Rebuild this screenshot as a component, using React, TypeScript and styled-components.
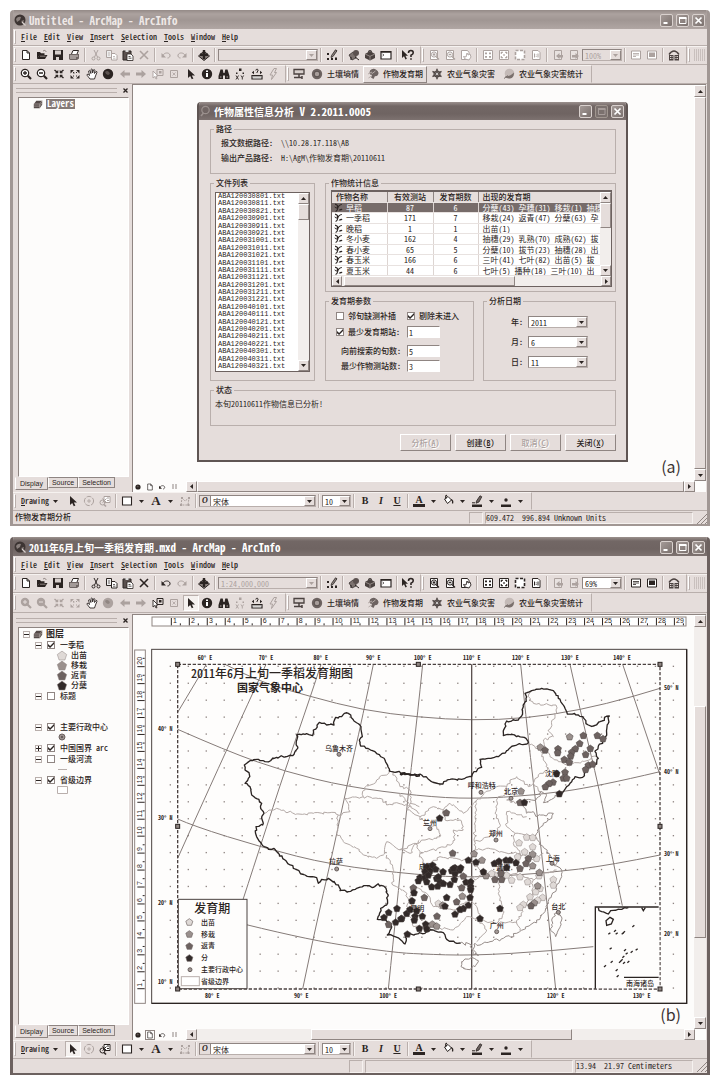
import React from 'react';
import styled, { createGlobalStyle, css } from 'styled-components';

const ink = '#2b2422';
const face = '#e5dddb';
const shade = '#8f8582';
const soft = '#b9afac';
const paper = '#fdfcfb';
const faded = '#aca29f';

const GlobalStyle = createGlobalStyle`
  *, *::before, *::after { box-sizing: border-box; }
  body {
    margin: 0;
    background: #fff;
    color: ${ink};
    font-family: 'Noto Sans CJK SC', 'Liberation Sans', sans-serif;
    font-feature-settings: 'hwid';
    font-size: 8px;
    line-height: 10px;
  }
  button, input, select { font: inherit; font-feature-settings: inherit; color: inherit; margin: 0; padding: 0; border: 0; background: none; border-radius: 0; }
  ul { margin: 0; padding: 0; list-style: none; }
`;

const raised = css`
  border: 1px solid;
  border-color: #fff ${shade} ${shade} #fff;
`;
const sunken = css`
  border: 1px solid;
  border-color: ${shade} #fff #fff ${shade};
`;

/* ---------- icons ---------- */

const cursor = 'M3 1v9l2.2-2 1.6 3.2 1.6-.8-1.6-3H10z';
const doc = 'M2.5 1.5h7v9h-7z';

const glyphs: Record<string, React.ReactNode> = {
  newDoc: <path d="M2.5 1.5h4.5l2.5 2.5v6.5h-7zM7 1.5v2.5h2.5" fill="#fff" stroke="currentColor" />,
  open: <><path d="M1 10V3h3l1 1.2h3.5V6H3.5z" fill="currentColor" /><path d="M3.3 6h8.2L9 10H1z" fill="currentColor" /><path d="M4 7.2h5.5M7 2.2c1-1.2 2.5-1 3.2.6" fill="none" stroke="#8b817e" /></>,
  save: <><path d="M1 1h10v10H1z" fill="currentColor" /><path d="M3 1.5h6v4H3zM4 8h3v3H4z" fill="#d8d0cd" /></>,
  print: <><path d="M3.5 5L5 1.5h5.5L9 5" fill="#fff" stroke="currentColor" /><path d="M1 5h10v4.5L9 11H2L1 10z" fill="#6e6462" /><path d="M2 7h8M2 9h6" stroke="#d8d0cd" /></>,
  cut: <><path d="M4 1l3.5 7M8 1L4.5 8" stroke="currentColor" fill="none" /><circle cx="3.5" cy="9.5" r="1.5" fill="none" stroke="currentColor" /><circle cx="8.5" cy="9.5" r="1.5" fill="none" stroke="currentColor" /></>,
  copy: <><path d="M.5 1.5h5v7h-5z" fill="#eee" stroke="currentColor" /><path d="M5.5 4.5H9l2 2v4.5H5.5z" fill="#fff" stroke="currentColor" /><path d="M7 7.5h2M7 9.2h2.5M2 4h2M2 6h2" stroke="currentColor" strokeWidth=".7" /></>,
  paste: <><path d="M1 2h8v9H1z" fill="#5a504e" stroke="currentColor" /><path d="M3.5 1h3v2h-3z" fill="#ddd" /><path d="M5 5h4l2 2v4.5H5z" fill="#fff" stroke="currentColor" strokeWidth=".8" /><path d="M6.5 7.5h2M6.5 9.2h3" stroke="currentColor" strokeWidth=".8" /></>,
  del: <path d="M2 2l8 8M10 2L2 10" stroke="currentColor" strokeWidth="1.6" fill="none" />,
  undo: <><path d="M3 6.5C4 3.5 9 3 10 6c.4 1.5-.8 3-2.5 3" fill="none" stroke="currentColor" /><path d="M1.5 4v4.5H6z" fill="currentColor" /></>,
  redo: <><path d="M9 6.5C8 3.5 3 3 2 6c-.4 1.5.8 3 2.5 3" fill="none" stroke="currentColor" /><path d="M10.5 4v4.5H6z" fill="currentColor" /></>,
  add: <><path d="M6 2l5.5 5L6 11.5.5 7z" fill="#8a807d" stroke="currentColor" /><path d="M4.8 1h2.4v3.5H10v2.4H7.2V10H4.8V6.9H2V4.5h2.8z" fill="currentColor" /></>,
  editor: <><path d="M5.5 6.5L9.5.8l1.5 1-4 5.7-2 1z" fill="#8a807d" stroke="currentColor" strokeWidth=".8" /><path d="M1 4h2v2H1zM1 9h2v2H1zM5 9h2v2H5zM9 8.5h2v2.5H9z" fill="currentColor" /></>,
  catalog: <><path d="M1 6l4-3 3 2v4l-4 2z" fill="#7d7370" stroke="currentColor" strokeWidth=".7" /><circle cx="8" cy="4" r="3" fill="#5b514f" /><path d="M7 8l4 3M3 8v3" stroke="currentColor" /></>,
  toolbox: <><path d="M1 5l5-3 5 3v4l-5 2.5L1 9z" fill="#4a413f" /><path d="M1 5l5 2.3L11 5M6 7.3v4" stroke="#a49a97" fill="none" strokeWidth=".8" /><path d="M4 2.5q2-2 4 0" stroke={ink} fill="none" /></>,
  command: <><path d="M1 2.5h10v7.5H1z" fill="#fff" stroke="currentColor" strokeWidth="1.2" /><path d="M1 3h10" stroke="currentColor" strokeWidth="1.6" /><path d="M2.5 5l1.5 1-1.5 1" stroke="currentColor" fill="none" strokeWidth=".7" /></>,
  help: <><path d="M0 1v8l2-1.8L3.5 10.5l1.4-.7-1.5-3H6z" fill="currentColor" /><path d="M6.500 4q0-2.500 2.400-2.500T11.200 4Q11.200 5.200 9 6.200V8" fill="none" stroke="currentColor" strokeWidth="1.6" /><path d="M8.200 9.200h1.6v1.6H8.200z" fill="currentColor" /></>,
  zoomIn: <><circle cx="5" cy="5" r="3.7" fill="#fff" stroke="currentColor" strokeWidth="1.2" /><path d="M5 3v4M3 5h4" stroke="currentColor" strokeWidth="1.3" /><path d="M7.8 7.8L11 11" stroke="currentColor" strokeWidth="2.2" /></>,
  zoomOut: <><circle cx="5" cy="5" r="3.7" fill="#fff" stroke="currentColor" strokeWidth="1.2" /><path d="M3 5h4" stroke="currentColor" strokeWidth="1.3" /><path d="M7.8 7.8L11 11" stroke="currentColor" strokeWidth="2.2" /></>,
  zoomInOff: <><circle cx="5" cy="5" r="4.2" fill="currentColor" /><path d="M5 3v4M3 5h4" stroke={face} /><path d="M7.5 7.5L11 11" stroke="currentColor" strokeWidth="2.2" /></>,
  zoomOutOff: <><circle cx="5" cy="5" r="4.2" fill="currentColor" /><path d="M3 5h4" stroke={face} /><path d="M7.5 7.5L11 11" stroke="currentColor" strokeWidth="2.2" /></>,
  fixedIn: <><path d="M2.5 5H5V2.500zM9.500 5H7V2.500zM2.500 7H5v2.500zM9.500 7H7v2.500z" fill="currentColor" stroke="currentColor" strokeWidth=".5" /><path d="M1.5 2L4 4M10.500 2L8 4M1.500 10L4 8M10.500 10L8 8" stroke="currentColor" strokeWidth="1.5" /></>,
  fixedOut: <><path d="M1.500 2h3.500l-3.500 3.500zM10.500 2H7l3.500 3.500zM1.500 10.500H5L1.500 7zM10.500 10.500H7L10.500 7z" fill="currentColor" /><path d="M4 4.500h1v1M8 4.500H7M4 8h1M8 8H7" stroke="currentColor" /></>,
  pan: <path d="M4 11L1 7.200q-.3-1.300 1.200-.8L3.500 7.500 2.600 3q.7-1.200 1.400 0l.9 2.500L5 1.500q.8-1 1.400 0L6.600 5l1-3.200q.9-.6 1.300.3L8.500 5.500 10 3.500q1-.3 1 .7L9.500 8 8.500 11z" fill="#fff" stroke="currentColor" strokeWidth=".9" />,
  globe: <><circle cx="6" cy="6" r="5.2" fill="currentColor" /><path d="M3 4q2-2 4 0t-1 3q-2 0-3-3zM8 8l1.500-1" fill="#7d7370" opacity=".6" /></>,
  back: <path d="M1 6l4.500-4v2.500H11v3H5.500V10z" fill="currentColor" />,
  forward: <path d="M11 6L6.500 2v2.500H1v3h5.500V10z" fill="currentColor" />,
  selFeature: <><path d="M5 1.500h6v6H5z" fill="none" stroke="currentColor" /><path d="M7 3h2.500v2.500H7z" fill="currentColor" /><path d="M1 3v7l1.800-1.500L4 11l1-.5-1.100-2.500H6z" fill="#fff" stroke="currentColor" strokeWidth=".9" /></>,
  clearSel: <><path d="M2.500 2.500h7v7h-7z" fill="none" stroke="currentColor" /><path d="M4.500 4.500l3 3M7.500 4.500l-3 3" stroke="currentColor" strokeWidth=".8" /></>,
  arrow: <path d={cursor} fill="currentColor" />,
  info: <><circle cx="6" cy="6" r="5.2" fill="currentColor" /><path d="M5 5h2v4H5zM5 2.500h2V4H5z" fill="#fff" /></>,
  find: <><path d="M2.500 1.500h2.200L5.500 5h1l.8-3.500h2.200L11.500 8v3H7V7.500H5V11H.5V8z" fill="currentColor" /><path d="M2 9h1.500M8.500 9H10" stroke="#b5aba8" /></>,
  goXY: <><path d="M5 .5h2.500V3H5zM2 4.500h1.500V6H2zM8.500 4.500H10V6H8.500z" fill="currentColor" /><path d="M2 7.500l2.500 4M4.500 7.500l-2.500 4M7 7.500l1.300 2v2M9.600 7.500l-1.300 2" stroke="currentColor" strokeWidth=".9" fill="none" /></>,
  measure: <><path d="M1 7.500h10v3.500H1z" fill="#fff" stroke="currentColor" strokeWidth="1.2" /><path d="M3 7.500v2M5 7.500v2M7 7.500v2M9 7.500v2" stroke="currentColor" strokeWidth=".8" /><path d="M.8 4.500L3 2.800v3.400zM11.200 4.500L9 2.800v3.400z" fill="currentColor" /><path d="M4.800 2.500Q5 1 6.200 1.200T7 3L6 4v1" fill="none" stroke="currentColor" /></>,
  lightning: <path d="M7 .5H9.500L7.500 4.500h2L4.500 11.500 5.500 7H3z" fill="none" stroke="currentColor" />,
  station: <><path d="M1 1.500h10v4.500H1z" fill="#d8d0cd" stroke="#4b4240" strokeWidth="1.3" /><path d="M6 6v3M1 9.500h8M9 8v3" stroke="#4b4240" strokeWidth="1.5" /></>,
  ring: <><circle cx="6" cy="6" r="5.2" fill="#6d6361" /><circle cx="6" cy="6" r="2.8" fill="#a79d9a" stroke="#4b4240" strokeWidth=".8" /></>,
  crop: <><path d="M3 2.500Q6-.5 9.500 2t1 5.500Q9 8.500 8 8L6.500 11 4 9.500 5 7Q1.500 7 3 2.500z" fill="#6d6361" /><path d="M1 6l4-2M4.500 6l4-3M1.500 10l3-2" stroke="#b5aba8" /></>,
  flower: <><path d="M6 .8v10.400M1.500 3.400l9 5.200M10.500 3.400l-9 5.200" stroke="#4b4240" strokeWidth="1.5" /><circle cx="6" cy="6" r="3" fill="none" stroke="#4b4240" strokeWidth="1.2" /><circle cx="6" cy="6" r="1" fill="#eee" /></>,
  ball: <><circle cx="6.5" cy="5.5" r="4.8" fill="#c4bab7" /><path d="M2 8q4 1.500 9-3.500Q11 10 7 10.500T2 8z" fill="#7a706d" /><path d="M1 10.500l4-3" stroke="#7a706d" /></>,
  pageZoomIn: <><path d={doc} fill="#fff" stroke="currentColor" /><circle cx="6" cy="5.5" r="2.6" fill="#fff" stroke="currentColor" /><path d="M6 4.200v2.600M4.700 5.500h2.600M8 7.500l3 3" stroke="currentColor" strokeWidth="1.3" /></>,
  pageZoomOut: <><path d={doc} fill="#fff" stroke="currentColor" /><circle cx="6" cy="5.5" r="2.6" fill="#fff" stroke="currentColor" /><path d="M4.700 5.500h2.600M8 7.500l3 3" stroke="currentColor" strokeWidth="1.3" /></>,
  pagePan: <><path d="M1.500 1.500h6l1.500 2v7H1.500z" fill="#fff" stroke="currentColor" /><path d="M5 10L3.500 7.500 6 8l1-4 1.200 2L10 5l1 3-2 3z" fill="#fff" stroke="currentColor" strokeWidth=".9" /></>,
  pageIn: <><path d="M1.500 1.500h9v9h-9z" fill="#fff" stroke="currentColor" /><path d="M3 3.500h2v1.700H3zM7 3.500h2v1.700H7zM3 7h2v1.700H3zM7 7h2v1.700H7z" fill="currentColor" /></>,
  pageOut: <><path d="M1.500 1.500h9v9h-9z" fill="#fff" stroke="currentColor" /><path d="M3 3h2L3 5zM9 3H7l2 2zM3 9h2L3 7zM9 9H7l2-2zM5.500 5.500h1v1h-1z" fill="currentColor" stroke="currentColor" strokeWidth=".5" /></>,
  pageWhole: <path d="M1.500 1.500h9v9h-9z" fill="#fff" stroke="currentColor" strokeWidth="1.6" strokeDasharray="3 1.5" />,
  page11: <><path d="M2.500 1.500h5.500l2 2v7H2.500z" fill="#fff" stroke="currentColor" /><path d="M4.500 4.500v4M8 4.500v4M6.200 5.500v.8M6.200 7.200V8" stroke="currentColor" /></>,
  pageBack: <><path d={doc} fill="#e8e2e0" stroke="currentColor" /><path d="M4 7l3.500-3v2H11v2.500H7.500V10z" fill="currentColor" /></>,
  pageFwd: <><path d={doc} fill="#e8e2e0" stroke="currentColor" /><path d="M11 7L7.500 4v2H4v2.500h3.500V10z" fill="currentColor" /></>,
  draft: <><path d="M1.500 2h9v8h-9z" fill="#fff" stroke="currentColor" /><path d="M3 4.500h6M3 6h6M3 7.500h3" stroke="currentColor" strokeWidth=".8" /></>,
  focus: <><path d="M1.500 2h9v8h-9z" fill="#fff" stroke="currentColor" /><path d="M3 3.500h6v4.500H3z" fill="currentColor" /></>,
  layout: <><path d="M1 5.500Q6-1.500 11 5.500" fill="none" stroke="#4b4240" strokeWidth="1.3" /><path d="M1 6h4.500v5.500H1zM6.500 6H11v5.500H6.500z" fill="#4b4240" /><path d="M2 7.500h2.500M2 9.500h2.500M7.500 7.500H10M7.500 9.500H10" stroke="#e5dddb" strokeDasharray="1 .6" /></>,
  haze: <path d="M0 1h12M0 3h12M0 5h12M0 7h12M0 9h12M0 11h12" stroke="currentColor" strokeDasharray="1 1" />,
  rotate: <><circle cx="6" cy="6" r="4.6" fill="none" stroke="currentColor" strokeDasharray="5 1.2" /><path d="M4 6h4M6 4v4" stroke="currentColor" strokeWidth=".8" /></>,
  zoomSel: <><path d="M5 1.500h6v6H5z" fill="#fff" stroke="currentColor" /><path d="M3.500 3.500l4 4M7.500 3.500l-4 4M8 3h2M8 5.500h2" stroke="currentColor" /><circle cx="3.5" cy="7.5" r="2.5" fill="none" stroke="currentColor" /><path d="M5 9.500l2 2" stroke="currentColor" strokeWidth="1.6" /></>,
  box: <path d="M1.500 2h9v8h-9z" fill="#fff" stroke="currentColor" strokeWidth="1.1" />,
  vertices: <><path d="M2 10L3 3l3 3 4-3-1 7z" fill="none" stroke="currentColor" strokeDasharray="2 1" /><path d="M1 9h2v2H1zM2 2h2v2H2zM9 2h2v2H9zM8.500 9h2v2h-2z" fill="currentColor" /></>,
  fill: <><path d="M2.500 4L6 1.500 9.500 5 5.500 8.500z" fill="#fff" stroke="currentColor" /><path d="M4 4q-1-4 1-3.500M9 4.500q2.500 1 1.500 4" fill="none" stroke="currentColor" strokeWidth="1.2" /></>,
  pen: <><path d="M5.500 6L9 .8l1.800 1L8 7 5 8.200z" fill="#6d6361" stroke="currentColor" strokeWidth=".8" /><path d="M1 7.800h3" stroke="currentColor" /><path d="M1 9.500h10V12H1z" fill="currentColor" /></>,
  marker: <><circle cx="6" cy="5" r="1.7" fill="currentColor" /><path d="M1 9.500h10V12H1z" fill="currentColor" /></>,
  layers: <><path d="M1 6l3-4h7v5l-3 4H1z" fill="#544a48" /><path d="M1 6h7v5M8 6l3-4M1 8.500h7l3-4" stroke="#b5aba8" fill="none" strokeWidth=".8" /></>,
  sprout: <><path d="M1.500 1.500L4.500 3v4M10.500 2Q6 2.500 5 7T2 11" fill="none" stroke="currentColor" strokeWidth="1.5" /><path d="M6 9.500q3.500 1.500 5.500-1.500-3-1.500-5.500 1.500zM0 4.500l3.500 1v2.500z" fill="currentColor" /></>,
  app: <><circle cx="6" cy="6" r="5.5" fill="#3d3533" /><path d="M2 5q2-3 5-2l-1 3-3 2zM7 7l3-1-1 3z" fill="#8a807d" /><path d="M8 8l3.500 3.500" stroke="#d8d0cd" strokeWidth="1.2" /></>,
  lens: <><circle cx="6.5" cy="5" r="3.7" fill="none" stroke="#9b918e" strokeWidth="1.2" /><path d="M4.500 8L2 11" stroke="#9b918e" strokeWidth="1.6" /></>,
};

const Svg = styled.svg`
  display: block;
  flex: none;
  overflow: visible;
`;
const Icon = ({ name, size = 12 }: { name: string; size?: number }) => (
  <Svg width={size} height={size} viewBox="0 0 12 12" aria-hidden="true">{glyphs[name]}</Svg>
);

/* ---------- window frame ---------- */

const Page = styled.main`
  display: flex;
  flex-direction: column;
  gap: 11px;
  padding: 10px;
`;

const Frame = styled.section<{ $active?: boolean }>`
  display: flex;
  flex-direction: column;
  border: 3px solid ${(p) => (p.$active ? '#6c615f' : '#a19794')};
  border-top: 0;
  border-bottom-width: 2px;
  border-radius: 4px 4px 0 0;
  background: ${face};
  overflow: hidden;
`;

const TitleBar = styled.header<{ $active?: boolean }>`
  display: flex;
  align-items: center;
  gap: 3px;
  height: 19px;
  padding: 1px 2px 0 1px;
  background: ${(p) => (p.$active
    ? 'linear-gradient(#9b918e 0, #726765 4px, #6f6462 12px, #7d7270 100%)'
    : 'linear-gradient(#948a87 0, #aca29f 4px, #a09693 10px, #b0a6a3 100%)')};
  color: ${(p) => (p.$active ? '#fff' : '#eee8e6')};
`;
const Title = styled.h1`
  flex: 1;
  margin: 0;
  font-size: 11px;
  line-height: 16px;
  font-weight: 700;
  white-space: pre;
`;
const TitleZh = styled.span`font-size: 10px;`;

const CaptionButtons = styled.div`
  display: flex;
  gap: 3px;
`;
const CaptionButton = styled.button`
  display: grid;
  place-items: center;
  width: 13px;
  height: 13px;
  border: 1px solid #d9d1ce;
  border-radius: 2px;
  background: linear-gradient(135deg, #a49a97, #7b716e);
  color: #fff;
  &:disabled { border-color: #a0968f; color: #a79d9a; background: #7b716e; }
`;
const Captions = ({ fixed }: { fixed?: boolean }) => (
  <CaptionButtons>
    <CaptionButton aria-label="Minimize"><Svg width="9" height="9" viewBox="0 0 9 9"><path d="M1.5 7h4" stroke="currentColor" strokeWidth="2" /></Svg></CaptionButton>
    <CaptionButton aria-label="Maximize" disabled={fixed}><Svg width="9" height="9" viewBox="0 0 9 9"><path d="M1.5 2h6.5v5.500H1.500z" fill="none" stroke="currentColor" /><path d="M1 2h7.500" stroke="currentColor" strokeWidth="2" /></Svg></CaptionButton>
    <CaptionButton aria-label="Close"><Svg width="9" height="9" viewBox="0 0 9 9"><path d="M1.500 1.500l6 6M7.500 1.500l-6 6" stroke="currentColor" strokeWidth="1.7" /></Svg></CaptionButton>
  </CaptionButtons>
);

const Bar = styled.div<{ $h: number }>`
  display: flex;
  height: ${(p) => p.$h}px;
  border-bottom: 1px solid ${soft};
  overflow: hidden;
`;
const MenuList = styled.div`
  display: flex;
  align-items: center;
  gap: 7px;
  padding-left: 3px;
`;
const MenuItem = styled.button`
  font-weight: 500;
`;
const Section = styled.div`
  display: flex;
  align-items: center;
  flex: none;
  padding-right: 4px;
  border: 1px solid;
  border-color: #f6f2f0 ${soft} transparent transparent;
  border-left: 0;
`;
const Grip = styled.span`
  align-self: stretch;
  width: 2px;
  margin: 1px 2px 1px 1px;
  border: 1px solid;
  border-color: #fff ${soft} ${soft} #fff;
`;
const Pairs = styled.div`
  display: flex;
  gap: 1px;
`;
const Pair = styled.div`display: flex;`;
const Divider = styled.span`
  width: 2px;
  height: 14px;
  margin: 0 2px;
  border-left: 1px solid ${soft};
  border-right: 1px solid #f6f2f0;
`;
const ToolButton = styled.button<{ $pressed?: boolean }>`
  display: grid;
  place-items: center;
  width: 16px;
  height: 16px;
  border: 1px solid transparent;
  ${(p) => p.$pressed && css`border-color: ${soft} #fff #fff ${soft}; background: #f5f1ef;`}
  &:disabled { color: ${faded}; }
`;
const Tool = ({ name, off, pressed }: { name: string; off?: boolean; pressed?: boolean }) => (
  <ToolButton aria-label={name} disabled={off} $pressed={pressed}><Icon name={name} /></ToolButton>
);
const TextTool = styled.button<{ $raised?: boolean }>`
  display: flex;
  align-items: center;
  gap: 4px;
  height: 17px;
  padding: 0 3px;
  border: 1px solid transparent;
  font-weight: 500;
  white-space: nowrap;
  ${(p) => p.$raised && css`border-color: #fff ${shade} ${shade} #fff;`}
`;

/* ---------- drop-down ---------- */

const ComboBox = styled.span<{ $w: number; $h: number; $off?: boolean }>`
  display: flex;
  flex: none;
  width: ${(p) => p.$w}px;
  height: ${(p) => p.$h}px;
  ${sunken}
  border-right-color: ${soft};
  border-bottom-color: ${soft};
  background: ${(p) => (p.$off ? face : '#fff')};
  color: ${(p) => (p.$off ? faded : ink)};
`;
const ComboSelect = styled.select`
  flex: 1;
  min-width: 0;
  padding-left: 2px;
  appearance: none;
  line-height: 9px;
  opacity: 1;
`;
const ComboArrow = styled.span`
  display: grid;
  place-items: center;
  width: 11px;
  background: ${face};
  ${raised}
`;
const Caret = ({ flip }: { flip?: 'up' | 'left' | 'right' }) => (
  <Svg width="5" height="5" viewBox="0 0 5 5" aria-hidden="true">
    <path fill="currentColor" d={flip === 'up' ? 'M0 4L2.5 1 5 4z' : flip === 'left' ? 'M4 0L1 2.5 4 5z' : flip === 'right' ? 'M1 0l3 2.5L1 5z' : 'M0 1h5L2.5 4z'} />
  </Svg>
);
const Combo = ({ label, value, w, h = 12, off, icon, id }: { label?: string; value: string; w: number; h?: number; off?: boolean; icon?: React.ReactNode; id?: string }) => (
  <ComboBox $w={w} $h={h} $off={off}>
    {icon}
    <ComboSelect id={id} aria-label={label} disabled={off} defaultValue={value}><option>{value}</option></ComboSelect>
    <ComboArrow><Caret /></ComboArrow>
  </ComboBox>
);

/* ---------- scroll bars ---------- */

const ScrollTrack = styled.div<{ $across?: boolean; $size: number }>`
  display: flex;
  flex-direction: ${(p) => (p.$across ? 'row' : 'column')};
  ${(p) => (p.$across ? `height: ${p.$size}px;` : `width: ${p.$size}px;`)}
  background: #f2eeec;
  min-width: 0;
`;
const ScrollButton = styled.button<{ $size: number }>`
  display: grid;
  place-items: center;
  flex: none;
  width: ${(p) => p.$size}px;
  height: ${(p) => p.$size}px;
  background: ${face};
  ${raised}
`;
const Rail = styled.div<{ $across?: boolean }>`
  display: flex;
  flex: 1;
  min-width: 0;
  min-height: 0;
  flex-direction: ${(p) => (p.$across ? 'row' : 'column')};
`;
const Thumb = styled.div<{ $span: number }>`
  flex: ${(p) => p.$span} 1 0;
  background: ${face};
  ${raised}
`;
const Space = styled.div<{ $n: number }>`flex: ${(p) => p.$n} 1 0;`;
const Scroll = ({ across, size, before, span, after }: { across?: boolean; size: number; before: number; span: number; after: number }) => (
  <ScrollTrack $across={across} $size={size}>
    <ScrollButton $size={size} aria-label={across ? 'Scroll left' : 'Scroll up'}><Caret flip={across ? 'left' : 'up'} /></ScrollButton>
    <Rail $across={across}>
      <Space $n={before} />
      <Thumb $span={span} />
      <Space $n={after} />
    </Rail>
    <ScrollButton $size={size} aria-label={across ? 'Scroll right' : 'Scroll down'}><Caret flip={across ? 'right' : undefined} /></ScrollButton>
  </ScrollTrack>
);

/* ---------- toolbars ---------- */

const menus = ['File', 'Edit', 'View', 'Insert', 'Selection', 'Tools', 'Window', 'Help'];

const StandardBar = ({ layout }: { layout?: boolean }) => (
  <Bar $h={19}>
    <Section>
      <Grip />
      <Tool name="newDoc" /><Tool name="open" /><Tool name="save" /><Tool name="print" />
      <Divider />
      <Tool name="cut" off={!layout} /><Tool name="copy" off={!layout} /><Tool name="paste" /><Tool name="del" off={!layout} />
      <Divider />
      <Tool name="undo" off={!layout} /><Tool name="redo" off />
      <Divider />
      <Tool name="add" />
      <Divider />
      <Combo label="Map scale" value={layout ? '1:24,000,000' : ''} w={100} off />
      <Divider />
      <Tool name="editor" />
      <Divider />
      <Tool name="catalog" /><Tool name="toolbox" /><Tool name="command" />
      <Divider />
      <Tool name="help" />
    </Section>
    <Section>
      <Grip />
      <Tool name="pageZoomIn" off={!layout} /><Tool name="pageZoomOut" off={!layout} /><Tool name="pagePan" off={!layout} />
      <Divider />
      <Tool name="pageIn" off={!layout} /><Tool name="pageOut" off={!layout} /><Tool name="pageWhole" off={!layout} /><Tool name="page11" off={!layout} />
      <Divider />
      <Tool name="pageBack" off /><Tool name="pageFwd" off />
      <Combo label="Page zoom" value={layout ? '69%' : '100%'} w={40} off={!layout} />
      <Divider />
      <Tool name="draft" off={!layout} /><Tool name="focus" off={!layout} />
      <Divider />
      <Tool name="layout" />
    </Section>
    <Section>
      <Grip />
      <Tool name="haze" off />
    </Section>
  </Bar>
);

const ToolsBar = ({ layout }: { layout?: boolean }) => (
  <Bar $h={layout ? 20 : 19}>
    <Section>
      <Grip />
      <Pairs>
        <Pair><Tool name={layout ? 'zoomInOff' : 'zoomIn'} off={layout} /><Tool name={layout ? 'zoomOutOff' : 'zoomOut'} off={layout} /></Pair>
        <Pair><Tool name="fixedIn" off={layout} /><Tool name="fixedOut" off={layout} /></Pair>
        <Pair><Tool name="pan" /><Tool name="globe" off={layout} /></Pair>
        <Pair><Tool name="back" off /><Tool name="forward" off /></Pair>
        <Pair><Tool name="selFeature" off={!layout} /><Tool name="clearSel" off /></Pair>
        <Pair><Tool name="arrow" pressed={layout} /><Tool name="info" /></Pair>
        <Pair><Tool name="find" /><Tool name="goXY" off={layout} /></Pair>
        <Pair><Tool name="measure" /><Tool name="lightning" off /></Pair>
      </Pairs>
    </Section>
    <Section>
      <Grip />
      <Tool name="station" />
      <TextTool><Icon name="ring" />土壤墒情</TextTool>
      <TextTool $raised={!layout}><Icon name="crop" />作物发育期</TextTool>
      <TextTool><Icon name="flower" />农业气象灾害</TextTool>
      <TextTool><Icon name="ball" />农业气象灾害统计</TextTool>
    </Section>
  </Bar>
);

const DrawLabel = styled.button`
  display: flex;
  align-items: center;
  gap: 4px;
  margin: 0 7px 0 3px;
  font-weight: 500;
`;
const FormatButton = styled.button<{ $kind?: 'b' | 'i' | 'u' | 'bar' }>`
  width: 16px;
  height: 14px;
  font-family: 'Liberation Serif', serif;
  font-size: ${(p) => (p.$kind ? 10 : 13)}px;
  line-height: 12px;
  font-weight: 700;
  font-style: ${(p) => (p.$kind === 'i' ? 'italic' : 'normal')};
  text-decoration: ${(p) => (p.$kind === 'u' ? 'underline' : 'none')};
`;
const Underbar = styled.span`
  display: block;
  width: 12px;
  margin: 0 auto;
  height: 12px;
  line-height: 9px;
  border-bottom: 3px solid ${ink};
`;
const DropButton = styled.button`
  display: grid;
  place-items: center;
  width: 13px;
  height: 14px;
`;
const Drop = () => <DropButton aria-label="More"><Caret /></DropButton>;
const TypeMark = styled.span`
  display: grid;
  place-items: center;
  width: 11px;
  background: ${face};
  border-right: 1px solid ${shade};
  font-family: 'Liberation Serif', serif;
  font-style: italic;
  font-weight: 700;
`;

const DrawingBar = ({ layout }: { layout?: boolean }) => (
  <Bar $h={19}>
    <Section>
      <Grip />
      <DrawLabel><span><u>D</u>rawing</span><Caret /></DrawLabel>
      <Tool name="arrow" pressed={layout} /><Tool name="rotate" off /><Tool name="zoomSel" off={!layout} />
      <Divider />
      <Tool name="box" /><Drop />
      <FormatButton aria-label="Text">A</FormatButton><Drop />
      <Tool name="vertices" off />
      <Divider />
      <Combo label="Font" value="宋体" w={117} icon={<TypeMark>O</TypeMark>} />
      <Divider />
      <Combo label="Font size" value="10" w={29} />
      <Divider />
      <FormatButton $kind="b">B</FormatButton>
      <FormatButton $kind="i">I</FormatButton>
      <FormatButton $kind="u">U</FormatButton>
      <Divider />
      <FormatButton $kind="bar" aria-label="Font colour"><Underbar>A</Underbar></FormatButton><Drop />
      <Tool name="fill" /><Drop />
      <Tool name="pen" /><Drop />
      <Tool name="marker" /><Drop />
    </Section>
  </Bar>
);

const StatusBar = styled.footer<{ $h: number }>`
  display: flex;
  gap: 2px;
  height: ${(p) => p.$h}px;
  padding: 1px 0 0 2px;
  font-weight: 500;
  white-space: pre;
`;
const Message = styled.span`flex: 1;`;
const Slot = styled.span<{ $w: number }>`
  width: ${(p) => p.$w}px;
  ${sunken}
  border-color: ${soft} #f6f2f0 #f6f2f0 ${soft};
  font-weight: 400;
  line-height: 9px;
`;
const SizeGrip = () => (
  <Svg width="12" height="12" viewBox="0 0 12 12" aria-hidden="true"><path d="M12 2L2 12M12 6l-6 6M12 10l-2 2" stroke={shade} /></Svg>
);

/* ---------- workspace ---------- */

const Workspace = styled.div<{ $h: number; $top: number }>`
  display: flex;
  min-height: ${(p) => p.$h}px;
  padding: ${(p) => p.$top}px 1px 0 0;
`;
const Contents = styled.aside`
  display: flex;
  flex-direction: column;
  width: 119px;
  flex: none;
  padding: 0 3px 2px 5px;
`;
const ContentsHead = styled.div`
  display: flex;
  align-items: center;
  gap: 4px;
  height: 13px;
  margin-left: -2px;
`;
const DragLines = styled.span`
  flex: 1;
  height: 5px;
  border-top: 1px solid ${soft};
  border-bottom: 1px solid ${soft};
`;
const CloseX = styled.button`
  display: grid;
  place-items: center;
  width: 8px;
  height: 10px;
`;
const TreeBox = styled.ul`
  display: flex;
  flex-direction: column;
  flex: 1;
  gap: 1px;
  padding-top: 1px;
  background: ${paper};
  ${sunken}
`;
const TreeRow = styled.div<{ $level: number }>`
  display: flex;
  align-items: center;
  gap: ${(p) => (p.$level === 2 ? 4 : p.$level ? 5 : 3)}px;
  height: 10px;
  padding-left: ${(p) => [4, 16, 38][p.$level]}px;
  font-weight: 500;
  white-space: nowrap;
`;
const RootName = styled.strong<{ $selected?: boolean }>`
  font-size: 9px;
  ${(p) => p.$selected && css`background: #857a77; color: #fff; padding: 0 1px;`}
`;
const Expander = styled.button<{ $hidden?: boolean }>`
  display: grid;
  place-items: center;
  width: 7px;
  height: 7px;
  border: 1px solid ${soft};
  visibility: ${(p) => (p.$hidden ? 'hidden' : 'visible')};
`;
const Check = styled.input`
  appearance: none;
  flex: none;
  width: 8px;
  height: 8px;
  border: 1px solid ${shade};
  background: #fff;
  &:checked::before {
    content: '';
    display: block;
    width: 6px;
    height: 6px;
    background: ${ink};
    clip-path: polygon(0 35%, 35% 65%, 100% 0, 100% 35%, 35% 100%, 0 70%);
  }
`;
const TreeLabel = styled.label`
  display: flex;
  align-items: center;
  gap: 5px;
`;
const ViewTabs = styled.div`
  display: flex;
  align-items: flex-start;
  height: 13px;
  margin-left: -3px;
`;
const ViewTab = styled.button<{ $on?: boolean }>`
  height: ${(p) => (p.$on ? 13 : 11)}px;
  padding: 0 ${(p) => (p.$on ? 4 : 3)}px;
  border: 1px solid;
  border-color: ${(p) => (p.$on ? face : shade)} ${shade} ${shade} #fff;
  font-family: 'Liberation Sans', sans-serif;
  font-size: 7px;
  line-height: ${(p) => (p.$on ? 11 : 9)}px;
`;

const Minus = ({ plus }: { plus?: boolean }) => (
  <Svg width="5" height="5" viewBox="0 0 5 5" aria-hidden="true"><path d={plus ? 'M0 2.5h5M2.5 0v5' : 'M0 2.5h5'} stroke={ink} /></Svg>
);
const pentagon = (x: number, y: number, r: number) =>
  [0, 1, 2, 3, 4].map((i) => {
    const a = -Math.PI / 2 + (i * 2 * Math.PI) / 5;
    return `${(x + r * Math.cos(a)).toFixed(1)},${(y + r * Math.sin(a)).toFixed(1)}`;
  }).join(' ');

const tone = { l: '#dfd9d6', g: '#9a908d', m: '#6d6260', d: '#322a29' };
type Tone = keyof typeof tone;

const Pent = ({ t }: { t: Tone }) => (
  <Svg width="10" height="9" viewBox="0 0 10 9" aria-hidden="true"><polygon points={pentagon(5, 5, 4.9)} fill={tone[t]} stroke="#8f8582" strokeWidth=".5" /></Svg>
);

const Layer = ({ name, checked, plus, children }: { name: string; checked?: boolean; plus?: boolean; children?: React.ReactNode }) => (
  <li>
    <TreeRow $level={1}>
      <Expander aria-label={name}><Minus plus={plus} /></Expander>
      <TreeLabel><Check type="checkbox" defaultChecked={checked} />{name}</TreeLabel>
    </TreeRow>
    {children}
  </li>
);

const Panel = ({ layout }: { layout?: boolean }) => (
  <Contents>
    <ContentsHead>
      <DragLines />
      <CloseX aria-label="Close"><Svg width="5" height="5" viewBox="0 0 5 5"><path d="M.5.5l4 4M4.5.5l-4 4" stroke={ink} strokeWidth="1.3" /></Svg></CloseX>
    </ContentsHead>
    <TreeBox>
      <li>
        <TreeRow $level={0}>
          <Expander $hidden={!layout} aria-label="Layers"><Minus /></Expander>
          <Icon name="layers" size={10} />
          <RootName $selected={!layout}>{layout ? '图层' : 'Layers'}</RootName>
        </TreeRow>
      </li>
      {layout && (
        <>
          <Layer name="一季稻" checked>
            <TreeRow $level={2}><Pent t="l" />出苗</TreeRow>
            <TreeRow $level={2}><Pent t="g" />移栽</TreeRow>
            <TreeRow $level={2}><Pent t="m" />返青</TreeRow>
            <TreeRow $level={2}><Pent t="d" />分蘖</TreeRow>
          </Layer>
          <Layer name="标题"><TreeRow $level={2} /><TreeRow $level={2} /></Layer>
          <Layer name="主要行政中心" checked>
            <TreeRow $level={2}><Svg width="9" height="8" viewBox="0 0 9 8"><circle cx="5" cy="4" r="3" fill="#9a908d" stroke="#6d6260" /><circle cx="5" cy="4" r="1" fill="#544a48" /></Svg></TreeRow>
          </Layer>
          <Layer name="中国国界 arc" checked plus />
          <Layer name="一级河流"><TreeRow $level={2}><Svg width="10" height="5" viewBox="0 0 10 5"><path d="M1 2.5h9" stroke={soft} /></Svg></TreeRow></Layer>
          <Layer name="省级边界" checked><TreeRow $level={2}><Svg width="11" height="8" viewBox="0 0 11 8"><path d="M.5.5h10v7H.5z" fill="#fff" stroke={soft} /></Svg></TreeRow></Layer>
        </>
      )}
    </TreeBox>
    <ViewTabs role="tablist">
      <ViewTab role="tab" $on>Display</ViewTab>
      <ViewTab role="tab">Source</ViewTab>
      <ViewTab role="tab">Selection</ViewTab>
    </ViewTabs>
  </Contents>
);

const View = styled.div`
  display: flex;
  flex-direction: column;
  flex: 1;
  min-width: 0;
  border-left: 1px solid ${shade};
  border-top: 1px solid ${shade};
`;
const ViewRow = styled.div`
  display: flex;
  flex: 1;
  min-height: 0;
`;
const Canvas = styled.div`
  position: relative;
  flex: 1;
  min-width: 0;
  background: ${paper};
  overflow: hidden;
`;
const ViewFoot = styled.div`
  display: grid;
  grid-template-columns: 53px 1fr 11px;
  height: 11px;
  background: ${paper};
`;
const ViewSwitch = styled.div`
  display: flex;
  align-items: center;
  gap: 2px;
`;
const SwitchButton = styled.button<{ $on?: boolean }>`
  display: grid;
  place-items: center;
  width: 10px;
  height: 10px;
  ${(p) => p.$on && css`border: 1px solid ${shade};`}
`;
const Switches = ({ layout }: { layout?: boolean }) => (
  <ViewSwitch>
    <SwitchButton aria-label="Data view"><Icon name="globe" size={6} /></SwitchButton>
    <SwitchButton aria-label="Layout view" $on={layout}><Icon name="newDoc" size={8} /></SwitchButton>
    <SwitchButton aria-label="Refresh"><Icon name="undo" size={8} /></SwitchButton>
    <SwitchButton aria-label="Pause"><Svg width="5" height="5" viewBox="0 0 5 5"><path d="M1 0v5M4 0v5" stroke={shade} /></Svg></SwitchButton>
  </ViewSwitch>
);
const FigureMark = styled.span`
  position: absolute;
  right: 13px;
  bottom: 6px;
  color: #3a3332;
  font-feature-settings: normal;
  font-size: 16px;
  line-height: 18px;
`;

interface AppWindowProps { layout?: boolean; title: React.ReactNode; mark: string; status: React.ReactNode; children: React.ReactNode }
const AppWindow = ({ layout, title, mark, status, children }: AppWindowProps) => (
  <Frame $active={layout}>
    <TitleBar $active={layout}><Icon name="app" /><Title>{title}</Title><Captions /></TitleBar>
    <Bar $h={layout ? 18 : 17} as="nav">
      <Grip />
      <MenuList>
        {menus.map((m) => <MenuItem key={m}><u>{m[0]}</u>{m.slice(1)}</MenuItem>)}
      </MenuList>
    </Bar>
    <StandardBar layout={layout} />
    <ToolsBar layout={layout} />
    <Workspace $h={layout ? 427 : 408} $top={layout ? 1 : 0}>
      <Panel layout={layout} />
      <View>
        <ViewRow>
          <Canvas>{children}<FigureMark>{mark}</FigureMark></Canvas>
          <Scroll size={12} before={layout ? 79 : 0} span={layout ? 232 : 100} after={layout ? 79 : 0} />
        </ViewRow>
        <ViewFoot>
          <Switches layout={layout} />
          <Scroll across size={11} before={layout ? 114 : 0} span={layout ? 260 : 100} after={layout ? 112 : 0} />
        </ViewFoot>
      </View>
    </Workspace>
    <DrawingBar layout={layout} />
    <StatusBar $h={layout ? 14 : 13}>{status}</StatusBar>
  </Frame>
);

/* ---------- analysis dialog ---------- */

const Dialog = styled.div`
  position: absolute;
  left: 64px;
  top: 17px;
  width: 431px;
  border: 2px solid #5f5553;
  border-top: 0;
  border-radius: 4px 4px 0 0;
  background: ${face};
  overflow: hidden;
`;
const DialogTitle = styled(TitleBar)`
  height: 18px;
  gap: 3px;
  padding: 0 2px 0 0;
`;
const DialogBody = styled.div`
  display: flex;
  flex-direction: column;
  gap: 4px;
  padding: 4px 10px 9px 11px;
`;
const GroupFrame = styled.fieldset`
  min-width: 0;
  margin: 0;
  padding: 0;
  border: 1px solid ${soft};
`;
const Legend = styled.legend`
  margin-left: 3px;
  padding: 0 2px;
  font-weight: 500;
  line-height: 10px;
`;
const GroupBody = styled.div<{ $pad: string }>`
  padding: ${(p) => p.$pad};
`;
const Group = ({ name, pad, children }: { name: string; pad: string; children: React.ReactNode }) => (
  <GroupFrame>
    <Legend>{name}</Legend>
    <GroupBody $pad={pad}>{children}</GroupBody>
  </GroupFrame>
);
const Columns = styled.div`
  display: grid;
  grid-template-columns: 105px 1fr;
  gap: 10px;
`;
const Stack = styled.div`
  display: flex;
  flex-direction: column;
  gap: 4px;
  min-width: 0;
`;
const Halves = styled.div`
  display: grid;
  grid-template-columns: 149px 1fr;
  gap: 9px;
`;
const PathList = styled.dl`
  display: grid;
  grid-template-columns: 60px 1fr;
  margin: 0;
  line-height: 15px;
  dt { font-weight: 500; }
  dd { margin: 0; }
`;
const FileBox = styled.div`
  display: flex;
  height: 180px;
  border: 1px solid #6d6260;
  background: #fff;
`;
const FileList = styled.ul`
  display: flex;
  flex: 1;
  flex-direction: column;
  justify-content: space-between;
  padding: 0 0 1px 2px;
  font-family: 'Liberation Mono', monospace;
  font-size: 7px;
  line-height: 7px;
`;
const TableBox = styled.div`
  display: flex;
  flex-direction: column;
  height: 97px;
  border: 1px solid #6d6260;
  border-width: 2px 1px 1px 1px;
  background: #fff;
`;
const TableClip = styled.div`
  flex: 1;
  min-width: 0;
  overflow: hidden;
`;
const StatTable = styled.table`
  width: 310px;
  height: 84px;
  table-layout: fixed;
  border-collapse: collapse;
  white-space: nowrap;
  th, td { padding: 0; line-height: 9px; text-align: center; border-right: 1px solid #ddd5d2; border-bottom: 1px solid #e8e2e0; overflow: hidden; }
  th { background: ${face}; border-right-color: ${shade}; height: 10px; font-weight: 500; }
  td:last-child, th:last-child { text-align: left; padding-left: 4px; }
  th:first-child { text-align: left; padding-left: 4px; }
`;
const StatRow = styled.tr<{ $on?: boolean }>`
  ${(p) => p.$on && css`background: #776c6a; color: #fff;`}
`;
const CropName = styled.span`
  display: flex;
  align-items: center;
  gap: 3px;
  padding-left: 2px;
  height: 9px;
  svg { color: ${ink}; }
`;
const Field = styled.div<{ $h: number; $mt?: number; $pl?: number }>`
  display: flex;
  align-items: center;
  height: ${(p) => p.$h}px;
  margin-top: ${(p) => p.$mt ?? 0}px;
  padding-left: ${(p) => p.$pl ?? 10}px;
`;
const CheckLabel = styled.label<{ $w?: number }>`
  display: flex;
  align-items: center;
  gap: 4px;
  width: ${(p) => (p.$w ? `${p.$w}px` : 'auto')};
  font-weight: 500;
  white-space: nowrap;
`;
const NumberBox = styled.input`
  width: 33px;
  height: 12px;
  padding: 0 0 0 1px;
  background: #fff;
  ${sunken}
  line-height: 10px;
`;
const Actions = styled.div`
  display: flex;
  justify-content: flex-end;
  gap: 4px;
  margin-top: 4px;
`;
const Action = styled.button`
  width: 51px;
  height: 17px;
  ${raised}
  font-weight: 500;
  &:disabled { color: ${faded}; text-shadow: 1px 1px 0 #fff; }
`;

const files = ['030801', '030811', '030821', '030901', '030911', '030921', '031001', '031011', '031021', '031101', '031111', '031121', '031201', '031211', '031221', '040101', '040111', '040121', '040201', '040211', '040221', '040301', '040311', '040321'];
const crops: [string, number, number, string][] = [
  ['早稻', 87, 6, '分蘖(43) 孕穗(31) 移栽(1) 抽穗'],
  ['一季稻', 171, 7, '移栽(24) 返青(47) 分蘖(63) 孕'],
  ['晚稻', 1, 1, '出苗(1)'],
  ['冬小麦', 162, 4, '抽穗(29) 乳熟(70) 成熟(62) 拔'],
  ['春小麦', 65, 5, '分蘖(10) 拔节(23) 抽穗(28) 出'],
  ['春玉米', 166, 6, '三叶(41) 七叶(82) 出苗(5) 拔'],
  ['夏玉米', 44, 6, '七叶(5) 播种(18) 三叶(10) 出'],
];

const AnalysisDialog = () => (
  <Dialog role="dialog" aria-label="作物属性信息分析">
    <DialogTitle $active><Icon name="lens" /><Title as="h2"><TitleZh>作物属性信息分析</TitleZh> V 2.2011.0005</Title><Captions fixed /></DialogTitle>
    <DialogBody>
      <Group name="路径" pad="1px 10px 8px">
        <PathList>
          <dt>报文数据路径:</dt><dd>\\10.28.17.118\AB</dd>
          <dt>输出产品路径:</dt><dd>H:\AgM\作物发育期\20110611</dd>
        </PathList>
      </Group>
      <Columns>
        <Group name="文件列表" pad="4px 4px 8px">
          <FileBox>
            <FileList>{files.map((f) => <li key={f}>ABA120{f}.txt</li>)}</FileList>
            <Scroll size={11} before={0} span={14} after={142} />
          </FileBox>
        </Group>
        <Stack>
          <Group name="作物统计信息" pad="2px 3px 4px 5px">
            <TableBox>
              <ViewRow>
                <TableClip>
                  <StatTable>
                    <colgroup><col width="55" /><col width="46" /><col width="45" /><col /></colgroup>
                    <thead><tr><th>作物名称</th><th>有效测站</th><th>发育期数</th><th>出现的发育期</th></tr></thead>
                    <tbody>
                      {crops.map(([name, a, b, c], i) => (
                        <StatRow key={name} $on={i === 0}>
                          <td><CropName><Icon name="sprout" size={9} />{name}</CropName></td><td>{a}</td><td>{b}</td><td>{c}</td>
                        </StatRow>
                      ))}
                    </tbody>
                  </StatTable>
                </TableClip>
                <Scroll size={11} before={0} span={24} after={38} />
              </ViewRow>
              <Scroll across size={10} before={2} span={170} after={86} />
            </TableBox>
          </Group>
          <Halves>
            <Group name="发育期参数" pad="0 0 8px">
              <Field $h={20}>
                <CheckLabel $w={71}><Check type="checkbox" />邻旬缺测补插</CheckLabel>
                <CheckLabel><Check type="checkbox" defaultChecked />剔除未进入</CheckLabel>
              </Field>
              <Field $h={12}>
                <CheckLabel $w={71}><Check type="checkbox" defaultChecked />最少发育期站:</CheckLabel>
                <NumberBox aria-label="最少发育期站" defaultValue="1" />
              </Field>
              <Field $h={12} $mt={7} $pl={15}>
                <CheckLabel $w={66} htmlFor="ten">向前搜索的旬数:</CheckLabel>
                <NumberBox id="ten" defaultValue="5" />
              </Field>
              <Field $h={12} $mt={3} $pl={15}>
                <CheckLabel $w={66} htmlFor="sites">最少作物测站数:</CheckLabel>
                <NumberBox id="sites" defaultValue="3" />
              </Field>
            </Group>
            <Group name="分析日期" pad="10px 0 0 27px">
              <Field $h={12} $pl={0}><CheckLabel $w={17} htmlFor="y">年:</CheckLabel><Combo id="y" value="2011" w={60} /></Field>
              <Field $h={12} $mt={8} $pl={0}><CheckLabel $w={17} htmlFor="m">月:</CheckLabel><Combo id="m" value="6" w={60} /></Field>
              <Field $h={12} $mt={8} $pl={0}><CheckLabel $w={17} htmlFor="d">日:</CheckLabel><Combo id="d" value="11" w={60} /></Field>
            </Group>
          </Halves>
        </Stack>
      </Columns>
      <Group name="状态" pad="4px 4px 16px">本旬20110611作物信息已分析!</Group>
      <Actions>
        <Action disabled>分析(<u>A</u>)</Action>
        <Action>创建(<u>B</u>)</Action>
        <Action disabled>取消(<u>C</u>)</Action>
        <Action>关闭(<u>X</u>)</Action>
      </Actions>
    </DialogBody>
  </Dialog>
);

/* ---------- map layout; three map units make one pixel ---------- */

type Pt = [number, number];
const pts = (s: string, dx = 0): Pt[] => s.trim().split(/\s+/).map((p) => {
  const [x, y] = p.split(',').map(Number);
  return [x + dx, y] as Pt;
});
const smooth = (p: Pt[]) => {
  if (p.length === 2) return `M${p[0].join(' ')}L${p[1].join(' ')}`;
  let d = `M${p[0][0]} ${p[0][1]}`;
  for (let i = 1; i < p.length - 1; i++) {
    const last = i === p.length - 2;
    const mx = last ? p[i + 1][0] : (p[i][0] + p[i + 1][0]) / 2;
    const my = last ? p[i + 1][1] : (p[i][1] + p[i + 1][1]) / 2;
    d += `Q${p[i][0]} ${p[i][1]} ${mx} ${my}`;
  }
  return d;
};
/* breaks straight runs into small uneven steps, the way a surveyed boundary looks */
const rough = (p: Pt[], amp: number) => {
  let seed = 7;
  const rnd = () => { seed = (seed * 16807) % 2147483647; return seed / 2147483647 - 0.5; };
  let d = `M${p[0][0]} ${p[0][1]}`;
  for (let i = 1; i < p.length; i++) {
    const [x0, y0] = p[i - 1];
    const [x1, y1] = p[i];
    const n = Math.max(1, Math.round(Math.hypot(x1 - x0, y1 - y0) / 7));
    for (let k = 1; k < n; k++) d += `L${(x0 + ((x1 - x0) * k) / n + rnd() * amp).toFixed(1)} ${(y0 + ((y1 - y0) * k) / n + rnd() * amp).toFixed(1)}`;
    d += `L${x1} ${y1}`;
  }
  return d;
};

/* the eastern half of the map is digitised from its own origin */
const E = 810;
const graticule = [
  pts('229,73 143,217'),
  pts('408,73 375,145 290,330 190,550 143,655'),
  pts('573,73 543,165 462,400 410,560 337,785'),
  pts('730,73 697,235 650,440 612,620 548,900 518,1047'),
  pts('878,73 862,230 838,430 810,705 790,900 775,1047'),
  pts('1172,73 1188,235 1215,470 1242,700 1265,930 1277,1047'),
  pts('1320,73 1350,210 1410,455 1445,645 1477,797'),
  pts('1478,73 1590,405'),
  pts('285,73 385,125 543,170 697,210 868,232 1025,241 1188,235 1350,210 1510,170 1590,145'),
  pts('143,268 290,333 465,395 650,440 868,468 1025,477 1215,466 1400,440 1590,395'),
  pts('143,537 190,558 395,622 605,675 868,705 1025,713 1245,700 1445,675 1590,645'),
  pts('345,853 548,903 790,937 868,942 1025,947 1265,933 1390,920'),
];
const border = [
  pts('870,407 778,393 765,360 735,335 708,325 692,318 688,300 697,290 693,260 672,243 655,220 643,220 635,230 617,232 612,255 590,255 568,247 550,270 548,287 525,283 500,285 503,325 488,347 440,352 405,365 385,358 360,362 343,375 345,390 357,398 355,415 345,430 360,440 365,465 395,490 392,505 402,520 395,535 398,555 378,560 380,590 395,612 415,628 432,625 465,660 490,685 525,705 560,713 565,730 575,718 595,715 625,735 630,752 655,755 680,745 710,737 730,742 745,732 768,745 773,770 770,795 752,805 742,838 765,838 785,860 772,885 795,890 810,898 825,912 830,882 855,883 885,880 910,870 940,878 950,898 975,908 992,909'),
  pts('0,402 30,402 65,405 95,425 120,432 150,418 185,418 215,410 222,395 245,382 240,358 265,355 295,350 320,332 350,315 385,308 378,295 350,290 335,283 310,287 315,262 320,243 355,240 365,228 370,200 378,175 375,160 395,152 425,145 460,152 475,175 490,195 502,222 535,225 548,230 565,255 580,258 600,245 628,228 625,250 620,280 610,298 608,310 595,318 585,335 595,355 590,372 565,380 548,412 525,410 515,425 500,440 480,460', E),
  pts('870,407 835,403 810,402'),
];
const coast = [
  pts('480,460 450,480 430,488 440,465 425,455 410,475 395,480 375,480 370,500 380,520 400,515 408,530 430,525 460,520 455,535 430,550 412,570 405,590 430,620 440,640 465,655 470,670 455,672 485,690 480,720 470,745 455,765 445,790 435,815 410,840 390,855 350,880 310,895 270,905 240,915 222,912 225,940 235,948 218,945 215,915 182,909', E),
  pts('185,965 215,952 235,962 225,980 200,988 183,980 185,965', E),
  pts('480,815 485,840 475,870 467,890 452,865 455,840 470,818 480,815', E),
];
const provinces = [
  ...['405,518 440,505 465,515 500,522 550,520 600,518 625,525 660,515 645,475 700,470 702,445 740,420 770,405 778,395',
    '700,470 750,475 770,495 800,488 835,497 868,520',
    '625,525 620,580 640,605 680,625 700,645 740,655 760,645 770,605 800,625 840,640 868,600',
    '790,395 810,440 840,450 840,490 868,500',
    '770,645 788,680 788,735 800,740 825,755 840,790 868,805'].map((s) => pts(s)),
  ...['395,152 385,170 400,190 430,195 468,195 465,230 445,270 460,290 430,300 440,335 450,350 475,365 500,375 540,370 575,350 590,350',
    '385,308 420,330 430,360 445,385 420,400 400,430',
    '425,455 400,430 385,440 350,410 330,420 320,440 290,440',
    '0,460 30,495 20,510 60,530 100,500 130,510 150,490 165,500 190,520 220,490 250,465 290,440',
    '230,490 225,530 222,600 225,630', '295,470 285,520 300,560 270,590 225,605',
    '320,440 315,465 295,470', '350,440 345,465 320,480 345,490 370,480',
    '380,530 345,520 320,515 320,560 345,580 405,590', '345,580 340,610 360,640 330,640 260,625 225,630',
    '130,510 135,540 180,540 190,570 160,570 165,600 140,620 60,640 45,610 0,630',
    '60,530 80,555 110,560 120,590 75,600 45,610',
    '225,630 205,660 250,700 300,720 350,700 360,640', '60,640 75,680 120,650 190,660 205,660',
    '360,640 400,660 430,640', '250,700 225,720 215,710 210,780 160,810 100,800 80,760 40,740',
    '300,720 295,760 310,820 290,850 240,840 230,800 212,780', '350,700 400,720 430,700 470,690',
    '400,720 395,770 370,800 350,850 360,872', '240,840 260,870 230,905',
    '40,740 20,800 40,860 90,860 160,870 200,830 235,835', '290,850 330,845 350,850'].map((s) => pts(s, E)),
];

const stations: [Tone, string][] = [
  ['l', '374,635 353,650 357,608 380,591 398,592 398,620 410,655 285,705 335,720 360,710 383,725 417,707 460,718 460,735 420,745 407,755 428,772 390,770 413,780 370,793 360,802 115,790 320,705 275,700'],
  ['g', '509,290 421,321 363,453 222,641 246,660 398,642 398,677 258,707 418,697 413,737 403,788 187,768 128,795 97,852 110,858 303,690'],
  ['m', '550,286 592,286 609,296 435,330 474,326 473,338 526,326 539,310 515,336 571,325 557,343 512,348 493,358 508,366 565,375 578,372 557,388 495,396 490,414 500,414 459,426 447,430 436,440 360,487 139,518 158,639 385,655 378,670 360,685 285,718 305,718 303,700 393,797 190,708 185,743 170,785 73,772 40,743 111,828 -34,853'],
  ['d', '478,461 470,400 373,487 119,534 205,660 228,666 297,663 283,670 318,660 330,660 348,668 320,682 250,695 300,805 240,835 98,675 80,680 107,687 90,692 75,695 129,695 165,683 155,692 178,690 165,700 160,685 182,683 60,712 75,712 110,715 120,725 130,730 150,733 113,738 95,740 80,725 163,718 115,710 198,726 212,725 212,740 212,748 55,722 85,705 140,772 42,758 36,782 135,798 210,772 205,795 190,805 180,808 165,822 67,828 45,828 43,840 20,820 5,835 30,808 77,852 58,865 80,866 22,882 -9,805 -34,817 -48,832 3,836 -13,846 50,812'],
];
const cities: [string, number, number, number, number][] = [
  ['乌鲁木齐', 627, 343, 627, 332], ['拉萨', 620, 687, 618, 672], ['兰州', 900, 566, 900, 554],
  ['呼和浩特', 1053, 457, 1055, 445], ['北京', 1143, 475, 1143, 463], ['郑州', 1098, 600, 1097, 588],
  ['上海', 1266, 670, 1268, 662], ['沈阳', 1280, 405, 1266, 407], ['武汉', 1110, 672, 1120, 690],
  ['台北', 1285, 817, 1285, 806], ['广州', 1100, 875, 1100, 864], ['成都', 890, 690, 888, 686], ['昆明', 858, 815, 862, 812],
];
const range = (n: number) => Array.from({ length: n }, (_, i) => i);
const topLon: Pt[] = [[60, 225], [70, 408], [80, 572], [90, 730], [100, 878], [110, 1025], [120, 1172], [130, 1320], [140, 1476]];
const bottomLon: Pt[] = [[80, 247], [90, 514], [100, 775], [110, 1025], [120, 1277], [130, 1535]];
const leftLat: Pt[] = [[40, 268], [30, 535], [20, 788], [10, 1027]];
const rightLat: Pt[] = [[50, 143], [40, 395], [30, 641], [20, 882]];
const islets = pts('628,880 645,872 650,880 668,880 672,876 700,858 632,925 615,978 635,965 660,965 670,950 680,940 695,935 710,928 685,965 665,960 650,990 653,1008 675,930 672,968', E);

const MapSvg = styled.svg`
  display: block;
  font-family: 'Noto Sans CJK SC', sans-serif;
`;

const MapLayout = () => (
  <MapSvg width="561" height="414" viewBox="9 -75 1683 1242" role="img" aria-label="2011年6月上旬一季稻发育期图">
    <g fill="#fff" stroke={shade} strokeWidth="3">
      <rect x="66" y="-69" width="1602" height="27" />
      <rect x="14" y="30" width="32" height="1060" />
    </g>
    <g fill="none" stroke={ink} strokeWidth="3">
      {range(29).map((i) => <path key={i} d={`M${124 + i * 53.9} -66v22m27 -6v6`} />)}
      {range(20).map((i) => <path key={i} d={`M22 ${80 + i * 50.85}h22m-6 -25h6`} />)}
    </g>
    <g fontSize="21" fill={ink} fontFamily="Liberation Sans, sans-serif">
      {range(29).map((i) => <text key={i} x={129 + i * 53.9} y="-50">{i + 1}</text>)}
      {range(20).map((i) => <text key={i} transform={`translate(35 ${74 + i * 50.85}) rotate(-90)`}>{20 - i}</text>)}
    </g>
    <rect x="65" y="28" width="1605" height="1062" fill="#fefdfc" stroke="#4b4240" strokeWidth="3" />
    <path d="M1670 28v1062H65" fill="none" stroke={ink} strokeWidth="4" />
    <g fill="#8f8582">
      {range(20).map((r) => range(29).map((c) => <rect key={`${r}-${c}`} x={119 + c * 53.9} y={77 + r * 50.8} width="4" height="4" />))}
    </g>
    <g fill="none" stroke="#857b78" strokeWidth="3">
      {graticule.map((g, i) => <path key={i} d={smooth(g)} />)}
    </g>
    <path d="M1025 73V1047" stroke="#5b514f" strokeWidth="4" />
    <g fill="none" stroke="#b3a9a6" strokeWidth="3">
      {provinces.map((p, i) => <path key={i} d={rough(p, 9)} />)}
    </g>
    <g fill="none" stroke="#968c89" strokeWidth="3">
      {coast.map((p, i) => <path key={i} d={rough(p, 10)} />)}
    </g>
    <g fill="none" stroke={ink} strokeWidth="4" strokeLinejoin="round">
      {border.map((p, i) => <path key={i} d={rough(p, 7)} />)}
    </g>
    {cities.map(([name, cx, cy]) => <circle key={name} cx={cx} cy={cy} r="6" fill="#a39996" stroke="#544a48" strokeWidth="2.5" />)}
    {stations.map(([t, s]) => pts(s, E).map(([x, y], i) => (
      <polygon key={`${t}${i}`} points={pentagon(x, y + 1, 11)} fill={tone[t]} stroke={t === 'l' ? '#8f8582' : '#4b4240'} strokeWidth="1.5" />
    )))}
    <g fontSize="21" fontWeight="500" fill={ink} textAnchor="middle">
      {cities.map(([name, , , x, y]) => <text key={name} x={x} y={y}>{name}</text>)}
    </g>
    <rect x="143" y="73" width="1447" height="974" fill="none" stroke="#4b4240" strokeWidth="4" strokeDasharray="10 5" />
    <g fontSize="18" fontWeight="700" fill={ink} textAnchor="middle">
      {topLon.map(([n, x]) => <text key={n} x={x} y="60">{n}° E</text>)}
      {bottomLon.map(([n, x]) => <text key={n} x={x} y="1075">{n}° E</text>)}
      {leftLat.map(([n, y]) => <text key={n} x="106" y={y + 6}>{n}° N</text>)}
      {rightLat.map(([n, y]) => <text key={n} x="1624" y={y + 6}>{n}° N</text>)}
    </g>
    <text x="183" y="114" fontSize="36" fontWeight="500" fill={ink}>2011年6月上旬一季稻发育期图</text>
    <text x="321" y="157" fontSize="33" fontWeight="700" fill={ink}>国家气象中心</text>

    <rect x="145" y="778" width="206" height="268" fill="#fefdfc" stroke="#4b4240" strokeWidth="3" />
    <text x="193" y="820" fontSize="36" fontWeight="500" fill={ink}>发育期</text>
    {(['l', 'g', 'm', 'd'] as Tone[]).map((t, i) => (
      <polygon key={t} points={pentagon(178, 847 + i * 36, 11)} fill={tone[t]} stroke="#6d6260" strokeWidth="2" />
    ))}
    <circle cx="180" cy="989" r="6" fill="#a39996" stroke="#544a48" strokeWidth="2.5" />
    <rect x="154" y="1010" width="54" height="27" fill="#fff" stroke={soft} strokeWidth="3" />
    <g fontSize="21" fontWeight="500" fill={ink}>
      {['出苗', '移栽', '返青', '分', '主要行政中心', '省级边界'].map((s, i) => <text key={s} x="213" y={854 + i * 35.5}>{s}</text>)}
    </g>

    <rect x="1396" y="801" width="192" height="244" fill="#fefdfc" />
    <path d="M1396 1046V801h190" fill="none" stroke={ink} strokeWidth="4" />
    <g fill="none" stroke={ink} strokeWidth="4">
      <path d={rough(pts('595,803 605,815 625,822 632,812 660,808 685,803', E), 6)} />
      <path d="M1428 842l12-10 10 6-6 14-14 4zM1535 803l5 9 6-9" />
      <path d="M1482 1012h104" />
    </g>
    {islets.map(([x, y], i) => <path key={i} d={`M${x - 3} ${y + 3}l6-5`} stroke={ink} strokeWidth="4" />)}
    <text x="1488" y="1037" fontSize="21" fontWeight="500" fill={ink}>南海诸岛</text>

    {[[143, 73], [865, 73], [1590, 73], [143, 559], [1590, 559], [143, 1047], [865, 1047], [1590, 1047]].map(([x, y]) => (
      <rect key={`${x}-${y}`} x={x - 6} y={y - 6} width="12" height="12" fill="#8f8582" stroke={ink} strokeWidth="3" />
    ))}
  </MapSvg>
);

export default function App() {
  return (
    <>
      <GlobalStyle />
      <Page>
        <AppWindow
          title="Untitled - ArcMap - ArcInfo"
          mark="(a)"
          status={<><Message>作物发育期分析</Message><Slot $w={14} /><Slot $w={208}>609.472  996.894 Unknown Units</Slot><SizeGrip /></>}
        >
          <AnalysisDialog />
        </AppWindow>
        <AppWindow
          layout
          title={<><TitleZh>2011年6月上旬一季稻发育期</TitleZh>.mxd - ArcMap - ArcInfo</>}
          mark="(b)"
          status={<><Message /><Slot $w={14} /><Slot $w={208} /><Slot $w={118}>13.94  21.97 Centimeters</Slot><SizeGrip /></>}
        >
          <MapLayout />
        </AppWindow>
      </Page>
    </>
  );
}
